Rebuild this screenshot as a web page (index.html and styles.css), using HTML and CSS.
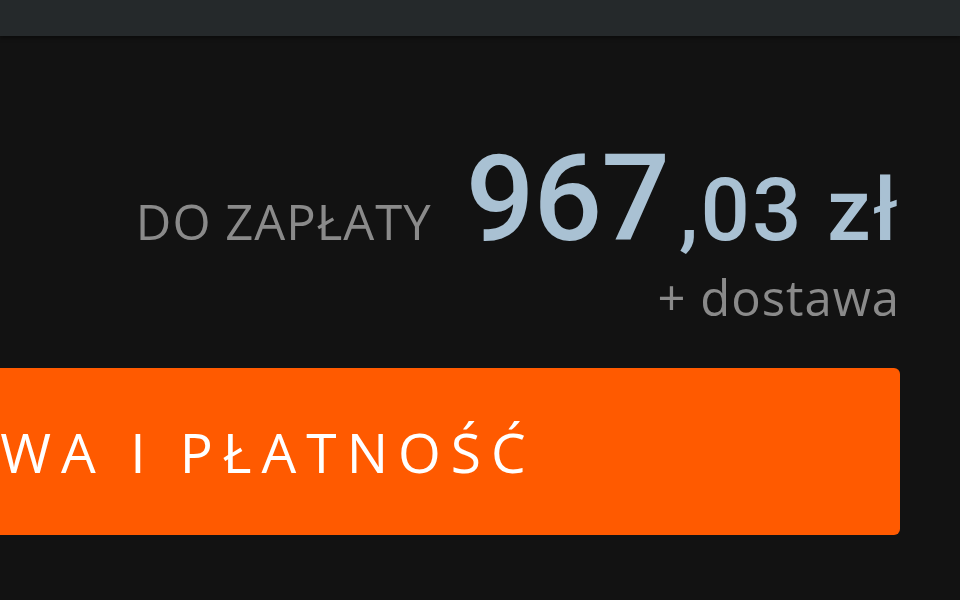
FILE: index.html
```html
<!DOCTYPE html>
<html lang="pl">
<head>
    <meta charset="UTF-8">
    <meta name="viewport" content="width=device-width, initial-scale=1.0">
    <title>Koszyk</title>
    <link rel="stylesheet" href="styles.css">
</head>
<body>
    <div class="topbar"></div>

    <div class="summary">
        <div class="total">
            <span class="total-label">DO ZAPŁATY</span>
            <span class="total-price">967<span class="cents">,03 zł</span></span>
        </div>
        <div class="delivery">+ dostawa</div>

        <button type="button" class="checkout">DOSTAWA I PŁATNOŚĆ</button>
    </div>
</body>
</html>
```

FILE: styles.css
```css
*, *::after, *::before {
    box-sizing: border-box;
}

body {
    margin: 0;
    background-color: #121212;
    font-family: 'Open Sans', 'Liberation Sans', sans-serif;
    overflow: hidden;
    height: 600px;
}

.topbar {
    height: 36px;
    background-color: #25292b;
    box-shadow: 0 2px 4px rgba(0, 0, 0, 0.4);
}

.summary {
    display: flex;
    flex-direction: column;
    align-items: flex-end;
    padding: 0 60px 0 0;
}

.total {
    display: flex;
    align-items: baseline;
    gap: 34px;
    margin-top: 103px;
    line-height: 1;
}
.total-label {
    font-size: 49px;
    color: #8a8a8a;
    letter-spacing: 1px;
}
.total-price {
    font-family: Roboto, 'Liberation Sans', sans-serif;
    font-weight: 500;
    font-size: 121px;
    color: #a9c1d3;
    letter-spacing: -1px;
}
.cents {
    font-size: 87px;
    letter-spacing: 2px;
    padding-left: 10px;
}

.delivery {
    font-size: 49px;
    color: #8a8a8a;
    line-height: 1;
    margin-top: 13px;
    letter-spacing: 1px;
}

.checkout {
    margin-top: 46px;
    width: 1492px;
    flex-shrink: 0;
    height: 167px;
    border: none;
    border-radius: 6px;
    background-color: #ff5a00;
    color: #fff;
    font-family: 'Open Sans', 'Liberation Sans', sans-serif;
    font-size: 55px;
    letter-spacing: 10px;
    text-align: center;
}
```
